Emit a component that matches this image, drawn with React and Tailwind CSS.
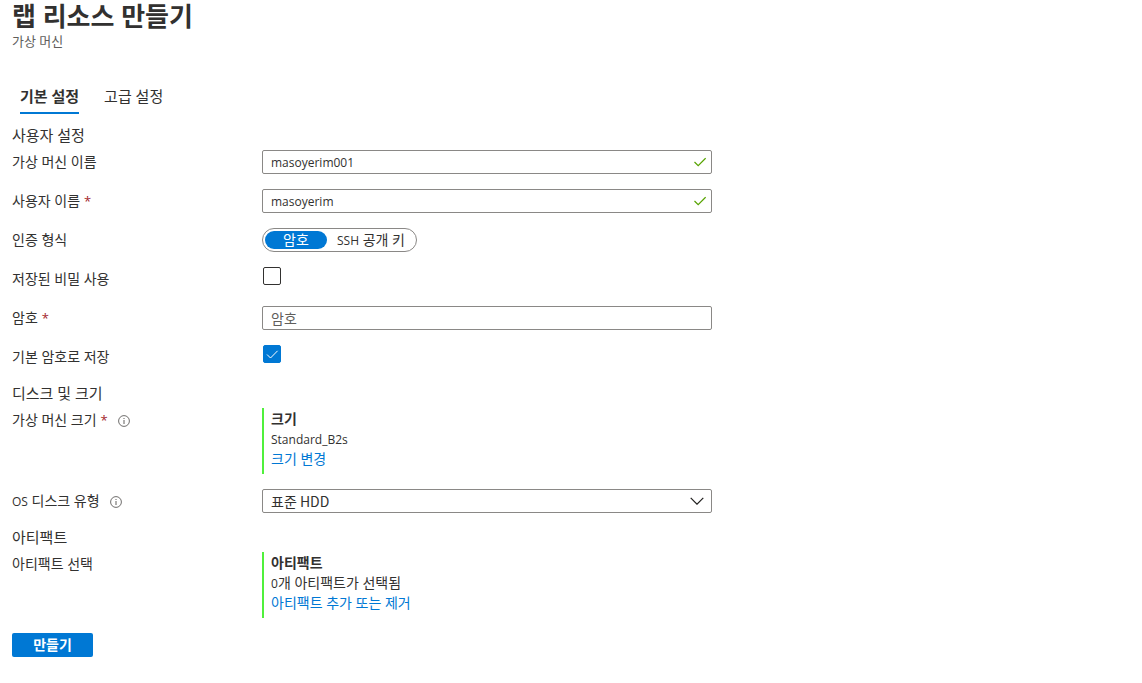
import React, { useState } from 'react';

function InfoIcon() {
  return (
    <svg className="h-3 w-3 shrink-0" viewBox="0 0 12 12" fill="none" stroke="#605e5c" aria-hidden="true">
      <circle cx="6" cy="6" r="5.4" strokeWidth="0.9" />
      <path d="M6 5v4M6 3v1" strokeWidth="1" />
    </svg>
  );
}

function Required() {
  return <span className="ml-1 text-[13px] text-[#a4262c]">*</span>;
}

function Section({ title, children }) {
  return (
    <section className="flex flex-col">
      <h2 className="mb-[6px] text-[15px] leading-[18px]">{title}</h2>
      <div className="flex flex-col gap-[15px]">{children}</div>
    </section>
  );
}

function Row({ id, label, required, info, children }) {
  return (
    <div className="grid grid-cols-[250px_minmax(0,450px)] items-start">
      <div className="flex h-6 items-center">
        <label htmlFor={id}>{label}</label>
        {required && <Required />}
        {info && (
          <button type="button" aria-label="정보" className="ml-[10px] mt-[2px]">
            <InfoIcon />
          </button>
        )}
      </div>
      {children}
    </div>
  );
}

function ValidatedInput({ id, initial }) {
  const [value, setValue] = useState(initial);
  return (
    <div className="relative">
      <input
        id={id}
        value={value}
        onChange={(e) => setValue(e.target.value)}
        className="block h-6 w-full rounded-[2px] border border-[#8a8886] bg-white pl-2 pr-7 text-[12px] outline-none"
      />
      <svg className="pointer-events-none absolute right-[6px] top-[7px] h-[10px] w-3" viewBox="0 0 12 10" fill="none" aria-hidden="true">
        <path d="M0.5 5 4.2 8.7 11.6 1.2" stroke="#57a300" strokeWidth="1.2" />
      </svg>
    </div>
  );
}

function CheckField({ id, initial }) {
  const [checked, setChecked] = useState(initial);
  return (
    <div className="relative ml-px h-[18px] w-[18px]">
      <input
        id={id}
        type="checkbox"
        checked={checked}
        onChange={(e) => setChecked(e.target.checked)}
        className="block h-[18px] w-[18px] appearance-none rounded-[2px] border border-[#323130] bg-white checked:border-[#0078d4] checked:bg-[#0078d4]"
      />
      {checked && (
        <svg className="pointer-events-none absolute left-0 top-0 h-[18px] w-[18px]" viewBox="0 0 18 18" fill="none" aria-hidden="true">
          <path d="M4 9.5 7.5 13 14.6 5.8" stroke="#fff" strokeWidth="1" />
        </svg>
      )}
    </div>
  );
}

function Summary({ title, detail, action }) {
  return (
    <div className="flex flex-col items-start border-l-2 border-[#50f03c] pb-[5px] pl-[7px] pt-px leading-5">
      <strong className="font-semibold">{title}</strong>
      <span className="h-5">{detail}</span>
      <a href="#" className="text-[#0078d4]">{action}</a>
    </div>
  );
}

export default function App() {
  const [auth, setAuth] = useState('password');
  const [tab, setTab] = useState('basic');
  const tabs = [
    { id: 'basic', label: '기본 설정' },
    { id: 'advanced', label: '고급 설정' },
  ];
  const authKinds = [
    { id: 'password', label: '암호', pad: 'w-[62px]' },
    { id: 'ssh', label: <><span className="text-[12px]">SSH</span> 공개 키</>, pad: 'pl-[10px] pr-[9px]' },
  ];
  return (
    <main className="bg-white px-3 pb-6 font-['Open_Sans','Noto_Sans_CJK_KR',sans-serif] text-[14px] leading-5 text-[#323130]">
      <header>
        <h1 className="text-[26px] font-bold leading-8">랩 리소스 만들기</h1>
        <p className="text-[13px] leading-[18px] text-[#605e5c]">가상 머신</p>
      </header>

      <div role="tablist" className="mt-[30px] flex gap-[25px] px-2 text-[15px]">
        {tabs.map((t) => (
          <button
            key={t.id}
            type="button"
            role="tab"
            aria-selected={tab === t.id}
            onClick={() => setTab(t.id)}
            className={`h-[34px] border-b-2 leading-8 ${tab === t.id ? 'border-[#0078d4] font-semibold' : 'border-transparent'}`}
          >
            {t.label}
          </button>
        ))}
      </div>

      <form className="mt-3 flex flex-col items-stretch gap-[15px]" onSubmit={(e) => e.preventDefault()}>
        <Section title="사용자 설정">
          <Row id="vm-name" label="가상 머신 이름">
            <ValidatedInput id="vm-name" initial="masoyerim001" />
          </Row>
          <Row id="user-name" label="사용자 이름" required>
            <ValidatedInput id="user-name" initial="masoyerim" />
          </Row>
          <Row id="auth-password" label="인증 형식">
            <div className="flex h-6 w-fit items-center rounded-full border border-[#8a8886] px-[2px]">
              {authKinds.map((k) => (
                <button
                  key={k.id}
                  id={`auth-${k.id}`}
                  type="button"
                  aria-pressed={auth === k.id}
                  onClick={() => setAuth(k.id)}
                  className={`h-[18px] whitespace-nowrap rounded-full leading-[18px] ${k.pad} ${auth === k.id ? 'bg-[#0078d4] text-white' : ''}`}
                >
                  {k.label}
                </button>
              ))}
            </div>
          </Row>
          <Row id="saved-secret" label="저장된 비밀 사용">
            <CheckField id="saved-secret" initial={false} />
          </Row>
          <Row id="password" label="암호" required>
            <input
              id="password"
              type="password"
              placeholder="암호"
              className="block h-6 w-full rounded-[2px] border border-[#8a8886] bg-white px-2 outline-none placeholder:text-[#605e5c]"
            />
          </Row>
          <Row id="default-password" label="기본 암호로 저장">
            <CheckField id="default-password" initial={true} />
          </Row>
        </Section>

        <Section title="디스크 및 크기">
          <Row label="가상 머신 크기" required info>
            <Summary title="크기" detail={<span className="text-[12px]">Standard_B2s</span>} action="크기 변경" />
          </Row>
          <Row id="os-disk" label={<><span className="text-[12px]">OS</span> 디스크 유형</>} info>
            <div className="relative">
              <select
                id="os-disk"
                defaultValue="hdd"
                className="block h-6 w-full appearance-none rounded-[2px] border border-[#8a8886] bg-white pl-2 pr-7 font-['Noto_Sans_CJK_KR',sans-serif] leading-[22px] outline-none"
              >
                <option value="hdd">표준 HDD</option>
                <option value="ssd">표준 SSD</option>
              </select>
              <svg className="pointer-events-none absolute right-2 top-[8px] h-2 w-[14px]" viewBox="0 0 14 8" fill="none" aria-hidden="true">
                <path d="M0.7 0.9 7 7.2 13.3 0.9" stroke="#201f1e" strokeWidth="1.2" />
              </svg>
            </div>
          </Row>
        </Section>

        <Section title="아티팩트">
          <Row label="아티팩트 선택">
            <Summary
              title="아티팩트"
              detail={<><span className="text-[12px]">0</span>개 아티팩트가 선택됨</>}
              action="아티팩트 추가 또는 제거"
            />
          </Row>
        </Section>

        <button type="submit" className="h-6 w-[81px] self-start rounded-[2px] bg-[#0078d4] font-semibold leading-6 text-white">
          만들기
        </button>
      </form>
    </main>
  );
}
